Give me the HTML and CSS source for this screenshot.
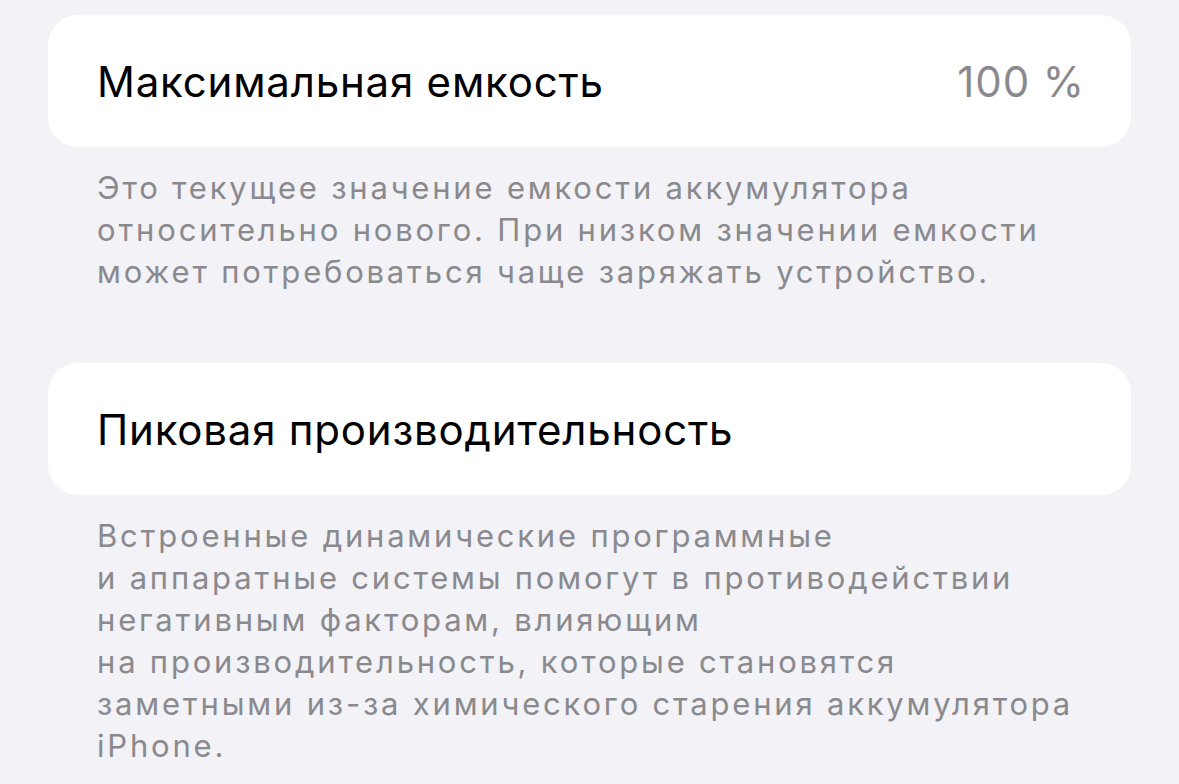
FILE: index.html
```html
<!DOCTYPE html>
<html lang="ru">
<head>
    <meta charset="UTF-8">
    <meta name="viewport" content="width=device-width, initial-scale=1.0">
    <title>Состояние аккумулятора</title>
    <link rel="stylesheet" href="styles.css">
</head>
<body>
    <div class="page">
        <div class="card">
            <span class="label">Максимальная емкость</span>
            <span class="value">100 %</span>
        </div>
        <p class="footer">
            Это текущее значение емкости аккумулятора<br>
            относительно нового. При низком значении емкости<br>
            может потребоваться чаще заряжать устройство.
        </p>

        <div class="card">
            <span class="label">Пиковая производительность</span>
        </div>
        <p class="footer">
            Встроенные динамические программные<br>
            и аппаратные системы помогут в противодействии<br>
            негативным факторам, влияющим<br>
            на производительность, которые становятся<br>
            заметными из-за химического старения аккумулятора<br>
            iPhone.
        </p>
    </div>
</body>
</html>
```

FILE: styles.css
```css
body {
    margin: 0;
    background-color: #f2f2f7;
    font-family: Inter, "Noto Sans", sans-serif;
}
.page {
    padding: 15px 48px 0 48px;
}
.card {
    background: #fff;
    border-radius: 30px;
    height: 132px;
    padding: 0 46px 0 49px;
    display: flex;
    align-items: center;
    justify-content: space-between;
}
.label {
    font-size: 42px;
    letter-spacing: 0.8px;
    color: #000;
}
.value {
    font-size: 42px;
    letter-spacing: 0.9px;
    color: #8a8a8e;
}
.footer {
    margin: 0;
    padding: 20px 49px 70px 49px;
    font-size: 31px;
    letter-spacing: 2.8px;
    line-height: 42px;
    color: #8a8a8e;
    white-space: nowrap;
}
```
